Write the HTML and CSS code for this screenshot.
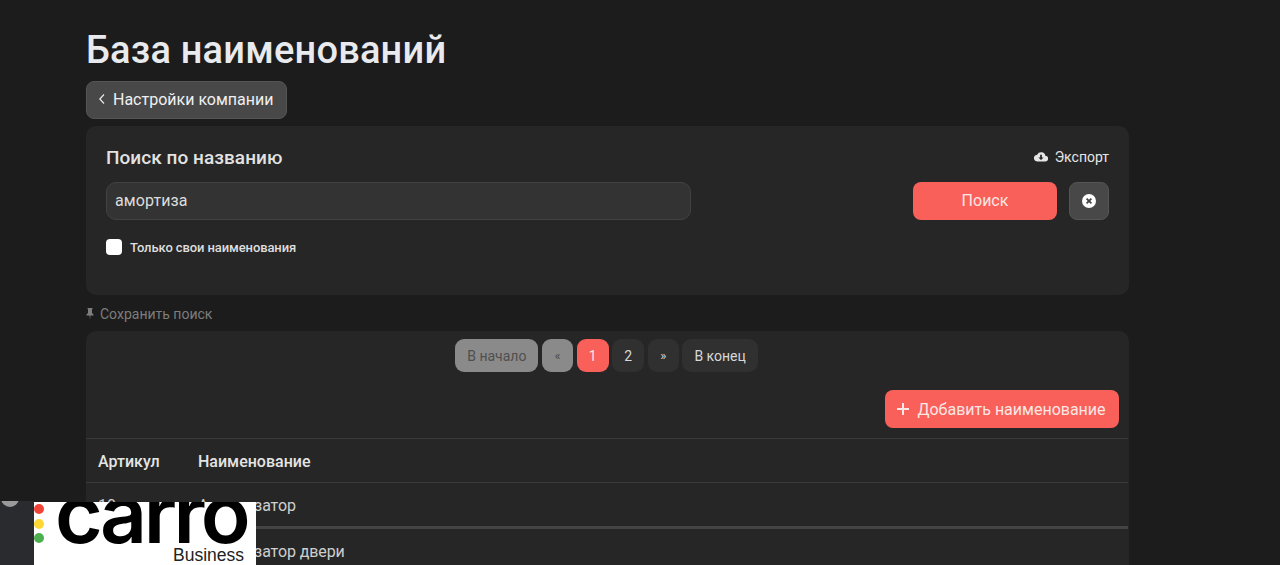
FILE: index.html
```html
<!DOCTYPE html>
<html lang="ru">
<head>
<meta charset="utf-8">
<title>База наименований</title>
<link rel="stylesheet" href="styles.css">
</head>
<body>
<main class="page">
  <h1 class="title">База наименований</h1>
  <a class="back"><svg class="chev" viewBox="0 0 8 12" width="8" height="12"><path d="M6 1.500 1.800 6 6 10.500" fill="none" stroke="currentColor" stroke-width="1.100"/></svg>Настройки компании</a>
  <section class="card search">
    <div class="search-head">
      <h2>Поиск по названию</h2>
      <a class="export"><svg viewBox="0 0 16 12" width="14" height="11"><path fill="currentColor" d="M13 5.100A5 5 0 0 0 3.600 3.900 3.900 3.900 0 0 0 4 11.700h8.600A3.300 3.300 0 0 0 13 5.100z"/><path fill="#262626" d="M7 4h2v3h2L8 10 5 7h2z"/></svg>Экспорт</a>
    </div>
    <div class="search-row">
      <div class="input">амортиза</div>
      <div class="search-actions">
        <button class="btn-red find">Поиск</button>
        <button class="clear"><svg viewBox="0 0 14 14" width="14" height="14"><circle cx="7" cy="7" r="7" fill="#fff"/><path d="M4.600 4.600l4.800 4.800M9.400 4.600l-4.800 4.800" stroke="#444" stroke-width="1.800"/></svg></button>
      </div>
    </div>
    <label class="check"><span class="box"></span>Только свои наименования</label>
  </section>
  <a class="save"><svg viewBox="0 0 8 12" width="8" height="12"><path fill="currentColor" d="M1.500 0h5v1H6v4l1.500 1.500V7.500H4.500L4 11.500 3.500 7.500H.5v-1L2 5V1h-.5z"/></svg>Сохранить поиск</a>
  <section class="card list">
    <nav class="pager">
      <span class="pg off">В начало</span>
      <span class="pg off narrow">«</span>
      <span class="pg on">1</span>
      <span class="pg">2</span>
      <span class="pg narrow">»</span>
      <span class="pg">В конец</span>
    </nav>
    <div class="tools">
      <button class="btn-red add"><svg viewBox="0 0 14 14" width="14" height="14"><path d="M7 1v12M1 7h12" stroke="currentColor" stroke-width="2"/></svg>Добавить наименование</button>
    </div>
    <div class="row head"><span class="col-a">Артикул</span><span>Наименование</span></div>
    <div class="row"><span class="col-a">10</span><span>Амортизатор</span></div>
    <div class="row sep"><span class="col-a">11</span><span>Амортизатор двери</span></div>
  </section>
</main>
<div class="strip"><div class="dot"></div></div>
<aside class="logo">
  <div class="lights"><i class="r"></i><i class="y"></i><i class="g"></i></div>
  <div class="word">carro</div>
  <div class="biz">Business</div>
</aside>
</body>
</html>
```
FILE: styles.css
```css
* { box-sizing: border-box; }
html, body { height: 565px; overflow: hidden; }
body {
  margin: 0;
  background: #1c1c1c;
  color: #e9e9ec;
  font-family: Roboto, "Noto Sans", sans-serif;
}
.page {
  width: 1043px;
  margin-left: 86px;
  padding-top: 28px;
  display: flex;
  flex-direction: column;
  align-items: stretch;
}
.title {
  margin: 0 0 8px;
  font-size: 38px;
  line-height: 45px;
  font-weight: 500;
  letter-spacing: 0.2px;
  color: #e9eaee;
}
.back {
  align-self: flex-start;
  display: flex;
  align-items: center;
  gap: 7px;
  height: 38px;
  padding: 0 12px 2px 11px;
  background: #484848;
  border: 1px solid #555;
  border-radius: 8px;
  font-size: 16px;
  color: #f0f0f0;
}
.card { background: #262626; border-radius: 10px; }
.search {
  margin-top: 7px;
  height: 169px;
  padding: 20px 20px 0;
}
.search-head { display: flex; justify-content: space-between; align-items: center; height: 23px; }
.search-head h2 { margin: 0; font-size: 19px; font-weight: 500; letter-spacing: .05px; color: #e2e2e2; }
.export { display: flex; align-items: center; gap: 7px; padding-bottom: 2px; font-size: 14px; color: #e6e6e6; }
.search-row { display: flex; justify-content: space-between; margin-top: 13px; }
.input {
  width: 585px;
  height: 38px;
  padding: 0 8px 2px;
  display: flex;
  align-items: center;
  background: #333;
  border: 1px solid #424242;
  border-radius: 10px;
  font-size: 16px;
  letter-spacing: .1px;
  color: #dcdcdc;
}
.search-actions { display: flex; gap: 12px; }
button { font-family: inherit; border: 0; padding: 0; }
.btn-red {
  background: #f9605a;
  color: #fbe7e5;
  border-radius: 8px;
}
.find { width: 144px; height: 38px; padding-bottom: 2px; font-size: 16px; }
.clear {
  width: 40px;
  height: 38px;
  display: flex;
  align-items: center;
  justify-content: center;
  background: #484848;
  border: 1px solid #555;
  border-radius: 8px;
}
.check {
  display: flex;
  align-items: center;
  gap: 8px;
  margin-top: 19px;
  font-size: 13px;
  letter-spacing: -.1px;
  font-weight: 500;
  color: #dedede;
}
.box { width: 16px; height: 16px; background: #fff; border-radius: 4px; }
.save {
  display: flex;
  align-items: center;
  gap: 6px;
  height: 18px;
  margin-top: 10px;
  font-size: 14px;
  color: #7d7d7d;
}
.list { margin-top: 8px; height: 300px; }
.pager {
  display: flex;
  justify-content: center;
  gap: 3.600px;
  padding: 8px 2px 0 0;
}
.pg {
  height: 33px;
  min-width: 32px;
  padding: 0 12px;
  display: flex;
  align-items: center;
  justify-content: center;
  background: #303030;
  border-radius: 9px;
  font-size: 14px;
  color: #d8d8d8;
}
.pg.narrow { min-width: 31px; padding: 0 10px; font-size: 13px; }
.pg.off { background: #8a8a8a; color: #4f4f4f; }
.pg.on { background: #f9605a; color: #fbe7e5; }
.tools { display: flex; justify-content: flex-end; padding: 18px 10px 10px 0; }
.add {
  height: 38px;
  width: 234px;
  padding-right: 2px;
  display: flex;
  align-items: center;
  justify-content: center;
  gap: 7px;
  font-size: 16px;
}
.row {
  display: flex;
  align-items: center;
  height: 44px;
  margin-right: 1px;
  padding: 2px 0 0 12px;
  border-top: 1px solid #3a3a3a;
  font-size: 16px;
  letter-spacing: -.1px;
  color: #cfcfcf;
}
.row.head { font-weight: 500; letter-spacing: 0; color: #e4e4e4; }
.row.sep { border-top: 3px solid #444; height: 48px; padding-top: 0; }
.col-a { width: 100px; }
.strip {
  position: absolute;
  left: 0;
  top: 501px;
  width: 34px;
  height: 64px;
  background: #2a2b2e;
  overflow: hidden;
}
.dot {
  width: 18px;
  height: 18px;
  margin: -12px 0 0 1px;
  border-radius: 50%;
  background: #9a9a9a;
}
.logo {
  position: absolute;
  left: 34px;
  top: 502px;
  width: 222px;
  height: 63px;
  background: #fff;
  overflow: hidden;
  color: #000;
}
.lights {
  position: absolute;
  left: 0;
  top: 2px;
  display: flex;
  flex-direction: column;
  gap: 4.500px;
}
.lights i { width: 10px; height: 10px; border-radius: 50%; }
.r { background: #f04438; }
.y { background: #fdd835; }
.g { background: #4caf50; }
.word {
  position: absolute;
  left: 21px;
  top: -40px;
  font-family: Inter, sans-serif;
  font-size: 82px;
  line-height: 104px;
  font-weight: 600;
  letter-spacing: -3.500px;
}
.biz {
  position: absolute;
  right: 12px;
  bottom: 0;
  font-family: "Liberation Sans", sans-serif;
  font-size: 17.500px;
  line-height: 19px;
  color: #222;
}
```
